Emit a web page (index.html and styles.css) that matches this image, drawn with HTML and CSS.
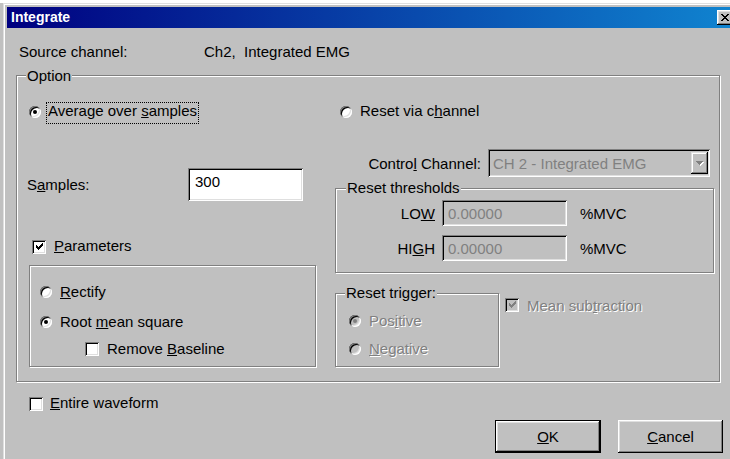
FILE: index.html
```html
<!DOCTYPE html>
<html lang="en">
<head>
<meta charset="utf-8">
<title>Integrate</title>
<link rel="stylesheet" href="styles.css">
</head>
<body>
<div class="page-strip"></div>
<div class="window">
  <div class="titlebar">
    <span class="title">Integrate</span>
    <span class="close-btn" title="Close">
      <svg width="8" height="7" viewBox="0 0 8 7"><path d="M0 0h2v1H0zM6 0h2v1H6zM1 1h2v1H1zM5 1h2v1H5zM2 2h4v1H2zM3 3h2v1H3zM2 4h4v1H2zM1 5h2v1H1zM5 5h2v1H5zM0 6h2v1H0zM6 6h2v1H6z" fill="#000"/></svg>
    </span>
  </div>

  <div class="client">
    <div class="source-row">
      <span class="source-label">Source channel:</span>
      <span>Ch2,&nbsp; Integrated EMG</span>
    </div>

    <div class="group option-group">
      <span class="legend">Option</span>
      <div class="option-cols">

        <div class="col">
          <div class="row row-top row-top-left">
            <span class="radio on"></span>
            <span class="focus">Average over <u>s</u>amples</span>
          </div>

          <div class="row samples-row">
            <span class="samples-label">S<u>a</u>mples:</span>
            <input class="field samples-field" type="text" value="300">
          </div>

          <div class="row params-row">
            <span class="check"><svg width="7" height="7" viewBox="0 0 7 7"><path class="tick" d="M6 0h1v1H6zM5 1h2v1H5zM0 2h1v1H0zM4 2h3v1H4zM0 3h2v1H0zM3 3h3v1H3zM0 4h5v1H0zM1 5h3v1H1zM2 6h1v1H2z"/></svg></span>
            <span class="box-text"><u>P</u>arameters</span>
          </div>

          <div class="frame params-frame">
            <div class="row rectify-row">
              <span class="radio"></span>
              <span class="radio-text"><u>R</u>ectify</span>
            </div>
            <div class="row rms-row">
              <span class="radio on"></span>
              <span class="radio-text">Root <u>m</u>ean square</span>
            </div>
            <div class="row baseline-row">
              <span class="check"></span>
              <span class="box-text">Remove <u>B</u>aseline</span>
            </div>
          </div>
        </div>

        <div class="col">
          <div class="row row-top row-top-right">
            <span class="radio"></span>
            <span class="radio-text">Reset via c<u>h</u>annel</span>
          </div>

          <div class="row control-row">
            <span class="control-label">Contro<u>l</u> Channel:</span>
            <div class="combo">
              <span class="combo-text">CH 2 - Integrated EMG</span>
              <span class="drop-btn">
                <svg width="8" height="5" viewBox="0 0 8 5"><path d="M1 1h7v1H1zM2 2h5v1H2zM3 3h3v1H3zM4 4h1v1H4z" fill="#fff"/><path d="M0 0h7v1H0zM1 1h5v1H1zM2 2h3v1H2zM3 3h1v1H3z" fill="#808080"/></svg>
              </span>
            </div>
          </div>

          <div class="frame thresholds">
            <span class="legend">Reset thresholds</span>
            <div class="row threshold-row threshold-low">
              <span class="threshold-label">LO<u>W</u></span>
              <input class="field threshold-field" type="text" value="0.00000" disabled>
              <span class="unit">%MVC</span>
            </div>
            <div class="row threshold-row threshold-high">
              <span class="threshold-label">HI<u>G</u>H</span>
              <input class="field threshold-field" type="text" value="0.00000" disabled>
              <span class="unit">%MVC</span>
            </div>
          </div>

          <div class="trigger-line">
            <div class="frame trigger">
              <span class="legend">Reset trigger:</span>
              <div class="row positive-row">
                <span class="radio on disabled"></span>
                <span class="radio-text dis">Pos<u>i</u>tive</span>
              </div>
              <div class="row negative-row">
                <span class="radio disabled"></span>
                <span class="radio-text dis"><u>N</u>egative</span>
              </div>
            </div>

            <div class="row mean">
              <span class="check disabled"><svg width="7" height="7" viewBox="0 0 7 7"><path class="tick" d="M6 0h1v1H6zM5 1h2v1H5zM0 2h1v1H0zM4 2h3v1H4zM0 3h2v1H0zM3 3h3v1H3zM0 4h5v1H0zM1 5h3v1H1zM2 6h1v1H2z"/></svg></span>
              <span class="box-text dis">Mean sub<u>t</u>raction</span>
            </div>
          </div>
        </div>

      </div>
    </div>

    <div class="row entire-row">
      <span class="check"></span>
      <span class="box-text"><u>E</u>ntire waveform</span>
    </div>

    <div class="buttons">
      <button class="btn btn-default" type="button"><u>O</u>K</button>
      <button class="btn" type="button"><u>C</u>ancel</button>
    </div>
  </div>
</div>
</body>
</html>
```

FILE: styles.css
```css
* {
  box-sizing: border-box;
}

html,
body {
  margin: 0;
  padding: 0;
}

body {
  width: 730px;
  height: 459px;
  overflow: hidden;
  background: #c0c0c0;
  color: #000;
  font-family: "Liberation Sans", Arial, sans-serif;
  font-size: 15px;
  line-height: 17px;
}

u {
  text-decoration: underline;
}

/* white page peeking above the dialog */
.page-strip {
  height: 3px;
  background: #fff;
}

/* ---------- window frame ---------- */
.window {
  width: 736px;
  height: 456px;
  margin-left: 3px;
  padding: 4px 4px 0;
  box-shadow: inset 1px 1px #dfdfdf, inset 2px 2px #fff;
}

.titlebar {
  height: 21px;
  display: flex;
  align-items: center;
  justify-content: space-between;
  padding: 0 2px 0 4px;
  background: linear-gradient(to right, #000080, #1084d0);
}

.title {
  color: #fff;
  font-size: 14px;
  font-weight: bold;
}

.close-btn {
  width: 16px;
  height: 15px;
  display: flex;
  align-items: center;
  justify-content: center;
  background: #c0c0c0;
  box-shadow: inset -1px -1px #000, inset 1px 1px #fff, inset -2px -2px #808080, inset 2px 2px #dfdfdf;
}

.close-btn svg,
.check svg,
.drop-btn svg {
  display: block;
}

/* ---------- dialog client area ---------- */
.client {
  display: flex;
  flex-direction: column;
  align-items: flex-start;
}

.source-row {
  display: flex;
  margin: 15px 0 0 12px;
}

.source-label {
  width: 185px;
}

/* etched group boxes */
.group,
.frame {
  position: relative;
  border: 1px solid #808080;
  box-shadow: inset 1px 1px #fff, 1px 1px #fff;
}

.legend {
  position: absolute;
  top: -10px;
  left: 9px;
  padding: 0 1px;
  background: #c0c0c0;
}

.option-group {
  width: 704px;
  height: 307px;
  margin: 15px 0 0 9px;
}

.option-group > .legend {
  top: -9px;
}

.option-cols {
  display: grid;
  grid-template-columns: 318px 1fr;
}

.col {
  display: flex;
  flex-direction: column;
  align-items: flex-start;
  padding-top: 26px;
}

.row {
  display: flex;
  align-items: flex-start;
}

/* ---------- radio buttons & check boxes ---------- */
.radio {
  position: relative;
  flex: none;
  width: 12px;
  height: 12px;
  margin-top: 3px;
  border-radius: 50%;
  background: #fff;
  box-shadow: inset 1px 1px #808080, inset -1px -1px #fff, inset 2px 2px #000, inset -2px -2px #dfdfdf;
}

.radio.on::after {
  content: "";
  position: absolute;
  left: 4px;
  top: 4px;
  width: 4px;
  height: 4px;
  border-radius: 50%;
  background: #000;
}

.radio.disabled {
  background: #c0c0c0;
}

.radio.disabled::after {
  background: #808080;
}

.radio-text {
  margin-left: 8px;
}

.check {
  flex: none;
  width: 14px;
  height: 14px;
  margin-top: 3px;
  padding: 3px 0 0 4px;
  background: #fff;
  box-shadow: inset 1px 1px #808080, inset -1px -1px #fff, inset 2px 2px #000, inset -2px -2px #dfdfdf;
}

.check .tick {
  fill: #000;
}

.check.disabled {
  background: #c0c0c0;
}

.check.disabled .tick {
  fill: #808080;
}

.box-text {
  margin-left: 8px;
}

.dis {
  color: #808080;
  text-shadow: 1px 1px #fff;
}

/* ---------- text fields ---------- */
.field {
  margin: 0;
  border: none;
  outline: none;
  font: inherit;
  color: #000;
  background: #fff;
  box-shadow: inset 1px 1px #808080, inset -1px -1px #fff, inset 2px 2px #000, inset -2px -2px #dfdfdf;
}

/* ---------- left column ---------- */
.row-top {
  height: 22px;
}

.row-top .radio {
  margin-top: 4px;
}

.row-top-left {
  padding-left: 12px;
}

.focus {
  margin-left: 5px;
  padding: 0 1px 4px;
  border: 1px dotted #000;
  line-height: 16px;
}

.samples-row {
  height: 33px;
  margin-top: 44px;
  padding-left: 10px;
  align-items: center;
}

.samples-label {
  width: 161px;
}

.samples-field {
  width: 115px;
  height: 33px;
  padding: 3px 4px 9px 7px;
}

.params-row {
  margin-top: 36px;
  padding-left: 15px;
}

.params-frame {
  width: 287px;
  height: 102px;
  margin: 11px 0 0 12px;
}

.rectify-row {
  margin: 17px 0 0 10px;
}

.rms-row {
  margin: 13px 0 0 10px;
}

.baseline-row {
  margin: 10px 0 0 55px;
}

.baseline-row .check {
  margin-top: 2px;
}

/* ---------- right column ---------- */
.row-top-right {
  padding-left: 5px;
}

.control-row {
  height: 28px;
  margin-top: 25px;
  align-items: center;
}

.control-label {
  width: 146px;
  text-align: right;
}

.combo {
  width: 222px;
  height: 28px;
  margin-left: 7px;
  padding: 2px 2px 2px 5px;
  display: flex;
  align-items: center;
  color: #808080;
  background: #c0c0c0;
  box-shadow: inset 1px 1px #808080, inset -1px -1px #fff, inset 2px 2px #000, inset -2px -2px #dfdfdf;
}

.combo-text {
  flex: 1;
}

.drop-btn {
  width: 17px;
  height: 22px;
  display: flex;
  align-items: center;
  justify-content: center;
  box-shadow: inset -1px -1px #000, inset 1px 1px #dfdfdf, inset -2px -2px #808080, inset 2px 2px #fff;
}

.thresholds {
  width: 379px;
  height: 85px;
  margin-top: 11px;
}

.thresholds > .legend {
  left: 10px;
}

.threshold-row {
  height: 26px;
  align-items: center;
}

.threshold-low {
  margin-top: 11px;
}

.threshold-high {
  margin-top: 9px;
}

.threshold-label {
  width: 99px;
  text-align: right;
}

.threshold-field {
  width: 125px;
  height: 26px;
  margin-left: 7px;
  padding: 0 4px 0 6px;
  color: #808080;
  background: #c0c0c0;
}

.unit {
  margin-left: 13px;
}

.trigger-line {
  display: flex;
  align-items: flex-start;
  margin-top: 20px;
}

.trigger {
  width: 164px;
  height: 74px;
}

.positive-row {
  margin: 18px 0 0 13px;
}

.negative-row {
  margin: 11px 0 0 13px;
}

.mean {
  margin-left: 6px;
}

.mean .check {
  margin-top: 5px;
}

.mean .box-text {
  margin-top: 4px;
}

/* ---------- bottom ---------- */
.entire-row {
  margin: 12px 0 0 22px;
}

.entire-row .box-text {
  margin-left: 7px;
}

.buttons {
  display: flex;
  gap: 17px;
  margin: 9px 0 0 488px;
}

.btn {
  width: 105px;
  height: 33px;
  padding: 0;
  border: none;
  font: inherit;
  color: #000;
  background: #c0c0c0;
  box-shadow: inset -1px -1px #000, inset 1px 1px #fff, inset -2px -2px #808080, inset 2px 2px #dfdfdf;
}

.btn-default {
  width: 106px;
  border: 1px solid #000;
}
```
